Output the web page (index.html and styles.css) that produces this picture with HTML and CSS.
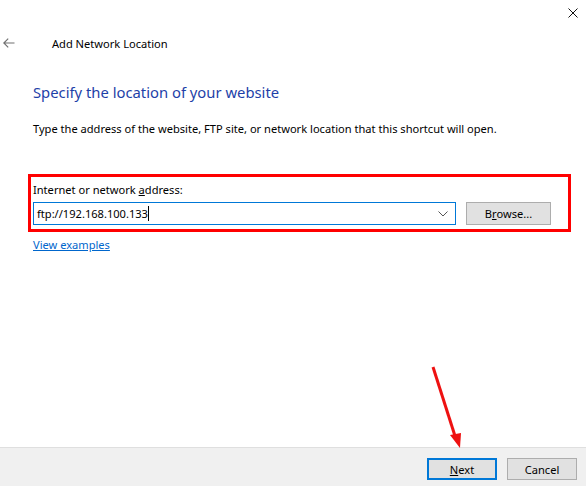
FILE: index.html
```html
<!DOCTYPE html>
<html>
<head>
<meta charset="utf-8">
<link rel="stylesheet" href="styles.css">
</head>
<body>
<div class="window">
  <div class="titlebar">
    <span class="close">
      <svg width="10" height="10" viewBox="0 0 10 10"><path d="M0.5 0.5 L9.5 9.5 M9.5 0.5 L0.5 9.5" stroke="#111" stroke-width="1" fill="none"/></svg>
    </span>
  </div>
  <div class="nav">
    <span class="back">
      <svg width="12" height="10" viewBox="0 0 12 10"><path d="M0.8 5 H11.5 M5.2 0.6 L0.8 5 L5.2 9.4" stroke="#707070" stroke-width="1.2" fill="none"/></svg>
    </span>
    <span class="title">Add Network Location</span>
  </div>
  <main class="content">
    <h1 class="heading">Specify the location of your website</h1>
    <p class="desc">Type the address of the website, FTP site, or network location that this shortcut will open.</p>
    <div class="field">
      <label class="label">Internet or network <u>a</u>ddress:</label>
      <div class="row">
        <div class="combo">
          <span class="value">ftp://192.168.100.133</span><span class="caret"></span>
          <svg class="chev" width="10" height="6" viewBox="0 0 10 6"><path d="M0.5 0.5 L5 5 L9.5 0.5" stroke="#555" stroke-width="1" fill="none"/></svg>
        </div>
        <span class="btn browse">B<u>r</u>owse...</span>
      </div>
    </div>
    <a class="link">View examples</a>
  </main>
  <footer class="footer">
    <span class="btn next default"><u>N</u>ext</span>
    <span class="btn cancel">Cancel</span>
  </footer>
  <svg class="annot" width="40" height="90" viewBox="0 0 40 90">
    <path d="M3 1 L25 70" stroke="#ee1111" stroke-width="3" fill="none"/>
    <path d="M20 69 L31 67 L30 82 Z" fill="#ee1111"/>
  </svg>
</div>
</body>
</html>
```

FILE: styles.css
```css
html, body {
  margin: 0;
  padding: 0;
  background: #ffffff;
}
body {
  font-family: "Noto Sans", "Open Sans", sans-serif;
  font-size: 11.1px;
  color: #000;
}
.window {
  position: relative;
  width: 586px;
  height: 486px;
  display: flex;
  flex-direction: column;
  overflow: hidden;
}
.titlebar {
  height: 30px;
  display: flex;
  justify-content: flex-end;
  align-items: flex-start;
}
.close {
  display: flex;
  margin: 8px 8px 0 0;
}
.nav {
  display: flex;
  align-items: center;
  height: 26px;
}
.back {
  display: flex;
  margin-left: 3px;
  width: 49px;
}
.title {
  font-size: 11.1px;
  line-height: 16px;
  margin-top: 2px;
  color: #000;
}
.content {
  flex: 1;
  padding: 0 14px 0 33px;
}
.heading {
  margin: 25px 0 0 0;
  font-weight: normal;
  font-size: 14.8px;
  line-height: 22px;
  color: #1e3fa8;
}
.desc {
  margin: 18px 0 0 0;
  line-height: 16px;
}
.field {
  margin: 37px 0 0 -5px;
  width: 543px;
  border: 3px solid #ff0000;
  padding: 3px 0 0 2px;
  box-sizing: border-box;
  height: 58px;
}
.label {
  display: block;
  line-height: 16px;
  margin-top: 2px;
}
.row {
  display: flex;
  gap: 10px;
  margin-top: 4px;
}
.combo {
  position: relative;
  width: 423px;
  height: 23px;
  box-sizing: border-box;
  border: 1px solid #0078d7;
  display: flex;
  align-items: center;
  padding-left: 3px;
}
.value {
  line-height: 16px;
}
.caret {
  display: inline-block;
  width: 1px;
  height: 15px;
  background: #000;
}
.chev {
  position: absolute;
  right: 7px;
  top: 8px;
}
.btn {
  display: flex;
  align-items: center;
  justify-content: center;
  box-sizing: border-box;
  background: #e1e1e1;
  border: 1px solid #adadad;
  color: #000;
}
.browse {
  width: 85px;
  height: 23px;
}
.link {
  display: inline-block;
  margin-top: 5px;
  color: #0066cc;
  text-decoration: underline;
  line-height: 16px;
}
.footer {
  height: 39px;
  background: #f0f0f0;
  border-top: 1px solid #dfdfdf;
  display: flex;
  justify-content: flex-end;
  align-items: flex-start;
  gap: 10px;
  padding: 10px 9px 0 0;
  box-sizing: border-box;
}
.next, .cancel {
  width: 70px;
  height: 22px;
}
.default {
  border: 2px solid #0078d7;
}
.annot {
  position: absolute;
  left: 430px;
  top: 366px;
}
```
